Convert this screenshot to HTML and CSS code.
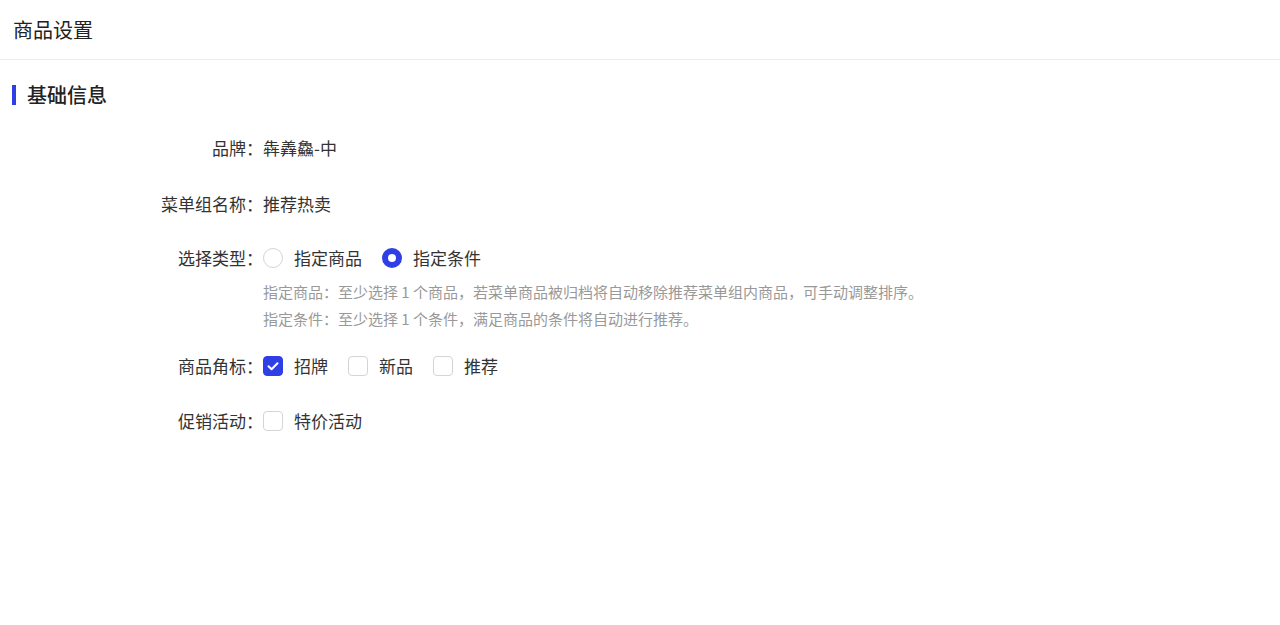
FILE: index.html
```html
<!DOCTYPE html>
<html lang="zh-CN">
<head>
<meta charset="utf-8">
<title>商品设置</title>
<link rel="stylesheet" href="styles.css">
</head>
<body>
<div class="page">
  <header class="page-header">商品设置</header>
  <section class="section">
    <h2 class="section-title">基础信息</h2>
    <div class="form">
      <div class="form-item item-brand">
        <div class="form-label">品牌：</div>
        <div class="form-value">犇羴鱻-中</div>
      </div>
      <div class="form-item item-menu">
        <div class="form-label">菜单组名称：</div>
        <div class="form-value">推荐热卖</div>
      </div>
      <div class="form-item item-type">
        <div class="form-label">选择类型：</div>
        <div class="form-value">
          <div class="options">
            <label class="option"><span class="radio"></span><span class="option-text">指定商品</span></label>
            <label class="option"><span class="radio checked"></span><span class="option-text">指定条件</span></label>
          </div>
          <div class="help">
            <div>指定商品：至少选择 1 个商品，若菜单商品被归档将自动移除推荐菜单组内商品，可手动调整排序。</div>
            <div>指定条件：至少选择 1 个条件，满足商品的条件将自动进行推荐。</div>
          </div>
        </div>
      </div>
      <div class="form-item item-tag">
        <div class="form-label">商品角标：</div>
        <div class="form-value">
          <div class="options">
            <label class="option"><span class="checkbox checked"><svg viewBox="0 0 20 20" width="20" height="20"><path d="M5.5 10.2 L8.6 13.2 L14.5 7.2" fill="none" stroke="#fff" stroke-width="2" stroke-linecap="round" stroke-linejoin="round"/></svg></span><span class="option-text">招牌</span></label>
            <label class="option"><span class="checkbox"></span><span class="option-text">新品</span></label>
            <label class="option"><span class="checkbox"></span><span class="option-text">推荐</span></label>
          </div>
        </div>
      </div>
      <div class="form-item item-promo">
        <div class="form-label">促销活动：</div>
        <div class="form-value">
          <div class="options">
            <label class="option"><span class="checkbox"></span><span class="option-text">特价活动</span></label>
          </div>
        </div>
      </div>
    </div>
  </section>
</div>
</body>
</html>
```

FILE: styles.css
```css
* { box-sizing: border-box; }
html, body {
  margin: 0;
  padding: 0;
  background: #fff;
}
body {
  font-family: "Noto Sans CJK SC", "Noto Sans", sans-serif;
  color: #333;
  font-size: 17px;
}
.page-header {
  height: 60px;
  line-height: 59px;
  padding-left: 13px;
  font-size: 20px;
  color: #222;
  border-bottom: 1px solid #ececec;
}
.section {
  padding-top: 25px;
}
.section-title {
  margin: 0 0 0 12px;
  padding-left: 11px;
  border-left: 4px solid #2f3fe6;
  font-size: 20px;
  font-weight: 500;
  line-height: 20px;
  height: 20px;
  color: #222;
}
.form {
  padding-top: 27px;
}
.form-item {
  display: flex;
  align-items: flex-start;
}
.form-label {
  width: 263px;
  flex: none;
  text-align: right;
  line-height: 32px;
  padding-right: 0;
  color: #333;
}
.form-value {
  line-height: 32px;
  color: #333;
}
.item-brand { margin-bottom: 24px; }
.item-menu { margin-bottom: 22px; }
.item-type { margin-bottom: 18px; }
.item-tag { margin-bottom: 23px; }
.options {
  display: flex;
  align-items: center;
  height: 32px;
}
.option {
  display: flex;
  align-items: center;
  margin-right: 20px;
}
.option-text {
  margin-left: 11px;
}
.radio {
  width: 20px;
  height: 20px;
  border: 1px solid #d4d4d4;
  border-radius: 50%;
  background: #fff;
  flex: none;
}
.radio.checked {
  border: 6px solid #2f3fe6;
}
.checkbox {
  width: 20px;
  height: 20px;
  border: 1px solid #d4d4d4;
  border-radius: 4px;
  background: #fff;
  flex: none;
  display: flex;
}
.checkbox.checked {
  background: #2f3fe6;
  border-color: #2f3fe6;
}
.checkbox svg {
  margin: -1px;
}
.help {
  margin-top: 4px;
  font-size: 15px;
  line-height: 27px;
  color: #999;
}
```
